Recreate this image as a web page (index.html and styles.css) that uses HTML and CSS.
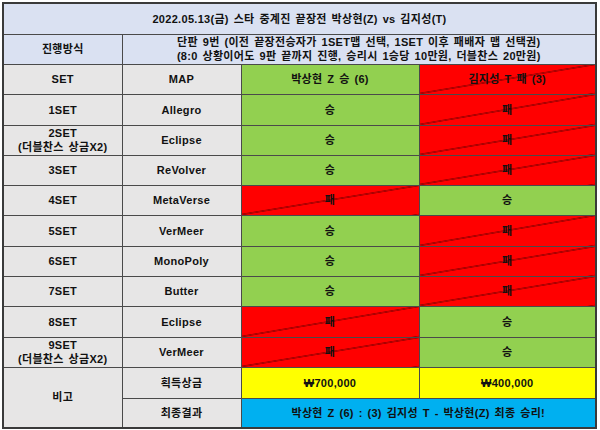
FILE: index.html
```html
<!DOCTYPE html>
<html lang="ko">
<head>
<meta charset="utf-8">
<link rel="stylesheet" href="styles.css">
</head>
<body>
<table class="sheet">
  <colgroup>
    <col class="c1"><col class="c2"><col class="c3"><col class="c4">
  </colgroup>
  <tr class="h31"><td colspan="4" class="blue-l">2022.05.13(금) 스타 중계진 끝장전 박상현(Z) vs 김지성(T)</td></tr>
  <tr class="h30"><td class="blue-l">진행방식</td><td colspan="3" class="blue-l rule">단판 9번 (이전 끝장전승자가 1SET맵 선택, 1SET 이후 패배자 맵 선택권)<br>(8:0 상황이어도 9판 끝까지 진행, 승리시 1승당 10만원, 더블찬스 20만원)</td></tr>
  <tr class="h30"><td class="grey">SET</td><td class="grey">MAP</td><td class="win">박상현 Z 승 (6)</td><td class="lose">김지성 T 패 (3)</td></tr>
  <tr class="h31"><td class="grey">1SET</td><td class="grey">Allegro</td><td class="win">승</td><td class="lose">패</td></tr>
  <tr class="h30"><td class="grey">2SET<br>(더블찬스 상금X2)</td><td class="grey">Eclipse</td><td class="win">승</td><td class="lose">패</td></tr>
  <tr class="h30"><td class="grey">3SET</td><td class="grey">ReVolver</td><td class="win">승</td><td class="lose">패</td></tr>
  <tr class="h30"><td class="grey">4SET</td><td class="grey">MetaVerse</td><td class="lose">패</td><td class="win">승</td></tr>
  <tr class="h31"><td class="grey">5SET</td><td class="grey">VerMeer</td><td class="win">승</td><td class="lose">패</td></tr>
  <tr class="h30"><td class="grey">6SET</td><td class="grey">MonoPoly</td><td class="win">승</td><td class="lose">패</td></tr>
  <tr class="h30"><td class="grey">7SET</td><td class="grey">Butter</td><td class="win">승</td><td class="lose">패</td></tr>
  <tr class="h31"><td class="grey">8SET</td><td class="grey">Eclipse</td><td class="lose">패</td><td class="win">승</td></tr>
  <tr class="h30"><td class="grey">9SET<br>(더블찬스 상금X2)</td><td class="grey">VerMeer</td><td class="lose">패</td><td class="win">승</td></tr>
  <tr class="h31"><td rowspan="2" class="grey">비고</td><td class="grey">획득상금</td><td class="prize">₩700,000</td><td class="prize">₩400,000</td></tr>
  <tr class="h30"><td class="grey">최종결과</td><td colspan="2" class="final">박상현 Z (6) : (3) 김지성 T - 박상현(Z) 최종 승리!</td></tr>
</table>
</body>
</html>
```
FILE: styles.css
```css
html, body {
  margin: 0;
  padding: 0;
  background: #ffffff;
}
body {
  padding: 2px 0 0 2px;
  font-family: "Liberation Sans", "Noto Sans CJK KR", sans-serif;
  font-weight: bold;
  font-size: 11px;
  color: #111;
}
.sheet {
  border-collapse: collapse;
  table-layout: fixed;
  width: 595px;
  border: 2px solid #3a3a3a;
}
.c1 { width: 119px; }
.c2 { width: 119px; }
.c3 { width: 178px; }
.c4 { width: 177px; }
.sheet td {
  border: 1px solid #4a4a4a;
  text-align: center;
  vertical-align: middle;
  padding: 0;
  line-height: 14px;
  overflow: hidden;
  white-space: nowrap;
  letter-spacing: 0.3px;
  word-spacing: 1.5px;
}
.h31 { height: 31px; }
.h30 { height: 30px; }
.blue-l { background: #dae1f2; }
.grey { background: #e7e6e6; }
.win { background: #92d050; }
.lose {
  background-color: #ff0000;
  background-image: linear-gradient(to bottom right, transparent calc(50% - 0.7px), #3a0000 50%, transparent calc(50% + 0.7px));
}
.prize { background: #ffff00; }
.final { background: #00b0f0; }
.rule { line-height: 15px; }
```
